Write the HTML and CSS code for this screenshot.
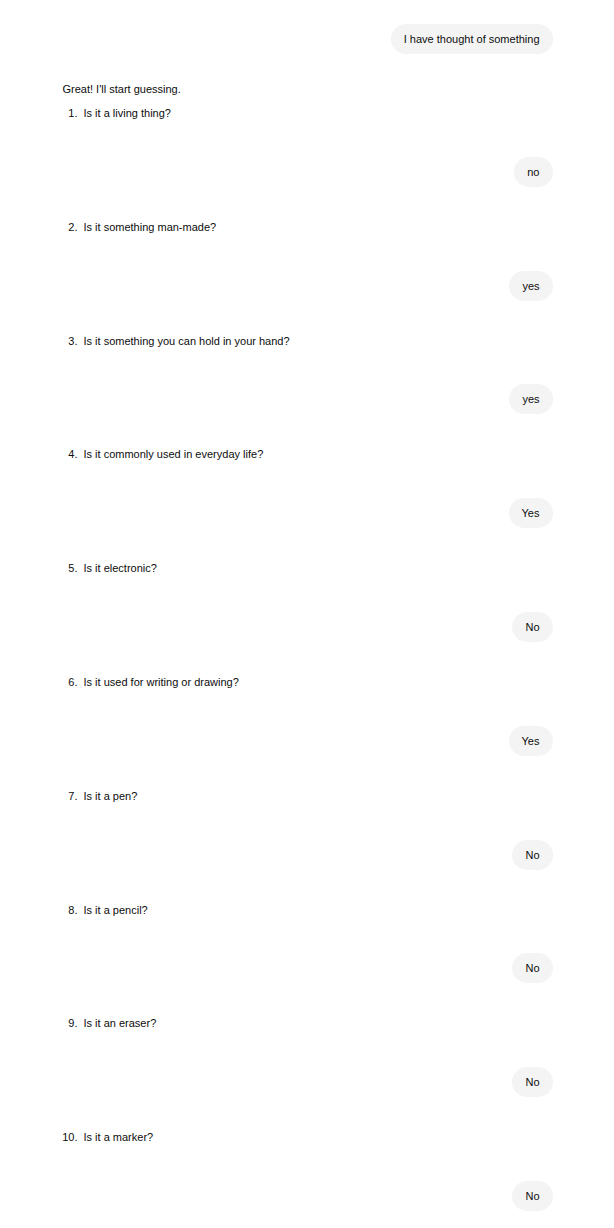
FILE: index.html
```html
<!DOCTYPE html>
<html lang="en">
<head>
<meta charset="utf-8">
<title>Guessing game</title>
<link rel="stylesheet" href="styles.css">
</head>
<body>
<main class="chat">
  <div class="user-row"><div class="bubble">I have thought of something</div></div>
  <div class="assistant first">
    <p class="intro">Great! I'll start guessing.</p>
    <ol class="q" start="1"><li>Is it a living thing?</li></ol>
  </div>
  <div class="user-row"><div class="bubble">no</div></div>
  <div class="assistant"><ol class="q" start="2"><li>Is it something man-made?</li></ol></div>
  <div class="user-row"><div class="bubble">yes</div></div>
  <div class="assistant"><ol class="q" start="3"><li>Is it something you can hold in your hand?</li></ol></div>
  <div class="user-row"><div class="bubble">yes</div></div>
  <div class="assistant"><ol class="q" start="4"><li>Is it commonly used in everyday life?</li></ol></div>
  <div class="user-row"><div class="bubble">Yes</div></div>
  <div class="assistant"><ol class="q" start="5"><li>Is it electronic?</li></ol></div>
  <div class="user-row"><div class="bubble">No</div></div>
  <div class="assistant"><ol class="q" start="6"><li>Is it used for writing or drawing?</li></ol></div>
  <div class="user-row"><div class="bubble">Yes</div></div>
  <div class="assistant"><ol class="q" start="7"><li>Is it a pen?</li></ol></div>
  <div class="user-row"><div class="bubble">No</div></div>
  <div class="assistant"><ol class="q" start="8"><li>Is it a pencil?</li></ol></div>
  <div class="user-row"><div class="bubble">No</div></div>
  <div class="assistant"><ol class="q" start="9"><li>Is it an eraser?</li></ol></div>
  <div class="user-row"><div class="bubble">No</div></div>
  <div class="assistant"><ol class="q" start="10"><li>Is it a marker?</li></ol></div>
  <div class="user-row"><div class="bubble">No</div></div>
</main>
</body>
</html>
```

FILE: styles.css
```css
html, body {
  margin: 0;
  padding: 0;
  background: #ffffff;
}
body {
  font-family: "Liberation Sans", Arial, sans-serif;
  font-size: 11px;
  line-height: 16px;
  color: #0d0d0d;
}
.chat {
  width: 490px;
  margin: 0 auto;
  padding: 24px 0 0 1px;
  display: flex;
  flex-direction: column;
}
.user-row {
  display: flex;
  justify-content: flex-end;
}
.bubble {
  background: #f4f4f4;
  border-radius: 15px;
  padding: 7px 13px;
  line-height: 16px;
}
.assistant {
  padding: 32px 0 35.8px;
}
.assistant.first {
  padding-top: 27px;
}
.intro {
  margin: 0 0 8px;
}
.q {
  margin: 0;
  padding-left: 18px;
}
.q li {
  padding-left: 3px;
}
```
